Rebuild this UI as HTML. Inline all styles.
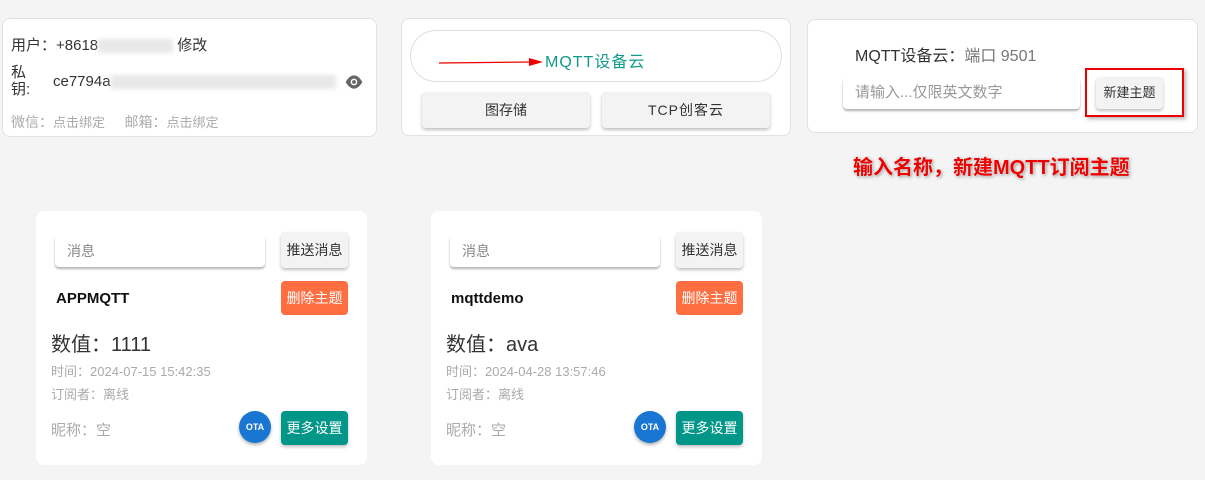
<!DOCTYPE html>
<html><head><meta charset="utf-8"><style>
*{box-sizing:border-box;margin:0;padding:0}
body{width:1205px;height:480px;background:#f4f4f4;font-family:"Liberation Sans","Noto Sans CJK SC",sans-serif;position:relative;overflow:hidden;color:#333}
.a{position:absolute;white-space:nowrap}
.card{position:absolute;background:#fff;border:1px solid #e2e2e2;border-radius:8px}
.btn{position:absolute;border-radius:4px;box-shadow:0 2px 3px rgba(0,0,0,.25);text-align:center;font-size:14px}
.inp{position:absolute;background:#fff;border-radius:4px;box-shadow:0 2px 2px rgba(0,0,0,.3);font-size:14px;color:#888;padding-left:12px}
.blur{display:inline-block;background:#e8e8e8;filter:blur(2px);height:14px;vertical-align:middle}
</style></head><body>
<div class="card" style="left:2px;top:18px;width:375px;height:119px"></div>
<div class="a" style="left:11px;top:34px;font-size:15px;color:#333">用户：+8618<span class="blur" style="width:75px"></span> 修改</div>
<div class="a" style="left:11px;top:64px;font-size:15px;line-height:17px">私<br>钥:</div>
<div class="a" style="left:53px;top:73px;font-size:15px">ce7794a<span class="blur" style="width:225px"></span></div>
<svg class="a" style="left:344px;top:74px" width="20" height="16" viewBox="0 0 24 18"><path d="M12 1C6 1 2 9 2 9s4 8 10 8 10-8 10-8-4-8-10-8z" fill="#666"/><circle cx="12" cy="9" r="4" fill="#fff"/><circle cx="12" cy="9" r="2.3" fill="#666"/></svg>
<div class="a" style="left:11px;top:112px;font-size:14px;color:#aaa">微信：<span style="font-size:13px">点击绑定</span>&nbsp;&nbsp;&nbsp;&nbsp; 邮箱：<span style="font-size:13px">点击绑定</span></div>

<div class="card" style="left:401px;top:18px;width:390px;height:118px"></div>
<div class="a" style="left:410px;top:30px;width:372px;height:52px;border:1px solid #ddd;border-radius:26px"></div>
<div class="a" style="left:545px;top:48px;font-size:16px;color:#129a8a;letter-spacing:1px">MQTT设备云</div>
<svg class="a" style="left:435px;top:55px" width="110" height="14"><line x1="4" y1="8" x2="95" y2="7" stroke="#e00" stroke-width="1.2"/><path d="M94 3 L108 7 L94 11 Z" fill="#e00"/></svg>
<div class="btn" style="left:422px;top:92px;width:168px;height:36px;line-height:36px;background:#f3f3f3">图存储</div>
<div class="btn" style="left:602px;top:92px;width:168px;height:36px;line-height:36px;background:#f3f3f3;letter-spacing:1px">TCP创客云</div>

<div class="card" style="left:807px;top:19px;width:391px;height:114px"></div>
<div class="a" style="left:855px;top:42px;font-size:16px;color:#333">MQTT设备云：<span style="color:#777">端口 9501</span></div>
<div class="inp" style="left:843px;top:77px;width:237px;height:32px;line-height:32px;font-size:15px;color:#999">请输入...仅限英文数字</div>
<div class="a" style="left:1085px;top:68px;width:99px;height:49px;border:2px solid #e00;box-shadow:2px 2px 4px rgba(0,0,0,.3)"></div>
<div class="btn" style="left:1096px;top:77px;width:67px;height:32px;line-height:32px;background:#f3f3f3;font-size:13px">新建主题</div>
<div class="a" style="left:853px;top:151px;font-size:20px;font-weight:bold;color:#e00;text-shadow:0 0 2px #fff,1px 1px 3px rgba(0,0,0,.5)">输入名称，新建MQTT订阅主题</div>

<div class="card" style="left:36px;top:211px;width:331px;height:254px;border:none"></div>
<div class="inp" style="left:55px;top:235px;width:210px;height:32px;line-height:32px">消息</div>
<div class="btn" style="left:281px;top:232px;width:67px;height:36px;line-height:36px;background:#f3f3f3">推送消息</div>
<div class="a" style="left:56px;top:290px;font-size:15px;font-weight:bold;color:#111">APPMQTT</div>
<div class="btn" style="left:281px;top:281px;width:67px;height:34px;line-height:34px;background:#ff6e40;color:#fff;box-shadow:none">删除主题</div>
<div class="a" style="left:51px;top:328px;font-size:20px;color:#333">数值：1111</div>
<div class="a" style="left:51px;top:361px;font-size:13px;color:#aaa">时间：2024-07-15 15:42:35</div>
<div class="a" style="left:51px;top:384px;font-size:13px;color:#aaa">订阅者：离线</div>
<div class="a" style="left:51px;top:419px;font-size:15px;color:#aaa">昵称：空</div>
<div class="a" style="left:239px;top:411px;width:32px;height:32px;border-radius:50%;background:#1976d2;color:#fff;font-size:9px;font-weight:bold;line-height:32px;text-align:center;box-shadow:0 2px 3px rgba(0,0,0,.3)">OTA</div>
<div class="btn" style="left:281px;top:411px;width:67px;height:34px;line-height:34px;background:#009688;color:#fff">更多设置</div>

<div class="card" style="left:431px;top:211px;width:331px;height:254px;border:none"></div>
<div class="inp" style="left:450px;top:235px;width:210px;height:32px;line-height:32px">消息</div>
<div class="btn" style="left:676px;top:232px;width:67px;height:36px;line-height:36px;background:#f3f3f3">推送消息</div>
<div class="a" style="left:451px;top:290px;font-size:15px;font-weight:bold;color:#111">mqttdemo</div>
<div class="btn" style="left:676px;top:281px;width:67px;height:34px;line-height:34px;background:#ff6e40;color:#fff;box-shadow:none">删除主题</div>
<div class="a" style="left:446px;top:328px;font-size:20px;color:#333">数值：ava</div>
<div class="a" style="left:446px;top:361px;font-size:13px;color:#aaa">时间：2024-04-28 13:57:46</div>
<div class="a" style="left:446px;top:384px;font-size:13px;color:#aaa">订阅者：离线</div>
<div class="a" style="left:446px;top:419px;font-size:15px;color:#aaa">昵称：空</div>
<div class="a" style="left:634px;top:411px;width:32px;height:32px;border-radius:50%;background:#1976d2;color:#fff;font-size:9px;font-weight:bold;line-height:32px;text-align:center;box-shadow:0 2px 3px rgba(0,0,0,.3)">OTA</div>
<div class="btn" style="left:676px;top:411px;width:67px;height:34px;line-height:34px;background:#009688;color:#fff">更多设置</div>
</body></html>
